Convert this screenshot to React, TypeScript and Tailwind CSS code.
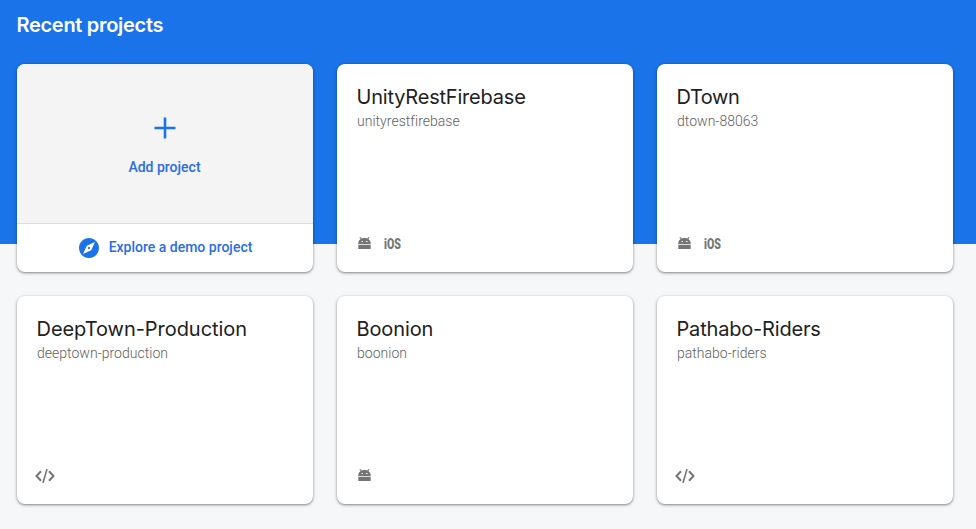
type Platform = 'android' | 'ios' | 'web';

interface Project {
  name: string;
  id: string;
  platforms: Platform[];
  nameTracking: string;
}

const projects: Project[] = [
  { name: 'UnityRestFirebase', id: 'unityrestfirebase', platforms: ['android', 'ios'], nameTracking: 'tracking-[-0.2px]' },
  { name: 'DTown', id: 'dtown-88063', platforms: ['android', 'ios'], nameTracking: 'tracking-[-0.45px]' },
  { name: 'DeepTown-Production', id: 'deeptown-production', platforms: ['web'], nameTracking: 'tracking-[-0.05px]' },
  { name: 'Boonion', id: 'boonion', platforms: ['android'], nameTracking: 'tracking-[-0.12px]' },
  { name: 'Pathabo-Riders', id: 'pathabo-riders', platforms: ['web'], nameTracking: 'tracking-[-0.18px]' },
];

const cardClass =
  'flex h-[208px] flex-col rounded-lg bg-white shadow-[0_1px_2px_0_rgba(0,0,0,0.3),0_1px_3px_1px_rgba(0,0,0,0.15)]';

function AndroidIcon() {
  return (
    <svg width="13" height="14" viewBox="0 0 13 14" fill="#757575" aria-label="Android">
      <path
        fillRule="evenodd"
        d="M.3 7.200V6.200C.3 4.300 1.200 2.900 2.700 2.100L1.400.8 2.200 0l1.600 1.500C4.600 1.100 5.500 1 6.500 1s1.900.1 2.700.5L10.800 0l.8.8L10.300 2.100c1.500.8 2.400 2.200 2.400 4.100v1zM3.500 3.900v1.200h1.400V3.900zM8.100 3.900v1.200h1.400V3.900z"
      />
      <path d="M.3 8h12.400v4H.3z" />
    </svg>
  );
}

function CodeIcon() {
  return (
    <svg className="-ml-[3px]" width="20" height="14" viewBox="0 0 20 14" fill="none" stroke="#757575" strokeWidth="2" aria-label="Web">
      <path d="M6 2.300 1.500 7 6 11.700M14 2.300 18.500 7 14 11.700" />
      <path d="M12 0 8 14" strokeWidth="1.600" />
    </svg>
  );
}

function PlatformMark({ platform }: { platform: Platform }) {
  if (platform === 'android') return <AndroidIcon />;
  if (platform === 'web') return <CodeIcon />;
  return (
    <span className="inline-block w-[17px] origin-left scale-x-[0.76] text-[14px] leading-[14px] font-black text-[#757575]">
      iOS
    </span>
  );
}

function ProjectCard({ project }: { project: Project }) {
  return (
    <article className={`${cardClass} px-5 pt-5 pb-[21px]`}>
      <h2 className={`-ml-[0.5px] font-[Inter,sans-serif] text-[20px] leading-[26px] whitespace-nowrap text-[#212121] ${project.nameTracking}`}>
        {project.name}
      </h2>
      <p className="mt-[1px] text-[14px] leading-5 font-light tracking-[0.02px] text-[#616161]">{project.id}</p>
      <div className="mt-auto flex h-[14px] items-center gap-[13px] pl-[1px]">
        {project.platforms.map((p) => (
          <PlatformMark key={p} platform={p} />
        ))}
      </div>
    </article>
  );
}

function StartCard() {
  return (
    <section className={`${cardClass} overflow-hidden text-[14px] leading-5 font-medium text-[#2a6de5]`}>
      <button className="flex h-[160px] flex-col items-center border-b border-[#dadce0] bg-[#f4f4f4] pt-[53px] pr-px">
        <svg width="22" height="22" viewBox="0 0 22 22" fill="none" stroke="#1a73e8" strokeWidth="2.600" aria-hidden="true">
          <path d="M11 .5v21M.5 11h21" />
        </svg>
        <span className="mt-[18px]">Add project</span>
      </button>
      <button className="flex h-12 items-center justify-center gap-[10px] pl-px">
        <svg width="20" height="20" viewBox="2 2 20 20" fill="#1a73e8" aria-hidden="true">
          <path d="M12 10.900c-.61 0-1.100.49-1.100 1.100s.49 1.100 1.100 1.100c.61 0 1.100-.49 1.100-1.100s-.49-1.100-1.100-1.100zM12 2C6.480 2 2 6.480 2 12s4.480 10 10 10 10-4.480 10-10S17.520 2 12 2zm2.190 12.190L6 18l3.810-8.190L18 6l-3.810 8.190z" />
        </svg>
        <span className="pb-[2px]">Explore a demo project</span>
      </button>
    </section>
  );
}

export default function App() {
  return (
    <main className="h-[529px] overflow-hidden bg-[linear-gradient(#1a73e8_244px,#f6f7f9_244px)] pl-[17px] font-[Roboto,sans-serif]">
      <h1 className="-ml-[0.5px] flex h-16 pt-3 font-[Inter,sans-serif] text-[20px] leading-[26px] font-semibold tracking-[-0.3px] whitespace-nowrap text-white">
        Recent projects
      </h1>
      <div className="grid grid-cols-[repeat(3,296px)] gap-6">
        <StartCard />
        {projects.map((p) => (
          <ProjectCard key={p.id} project={p} />
        ))}
      </div>
    </main>
  );
}
